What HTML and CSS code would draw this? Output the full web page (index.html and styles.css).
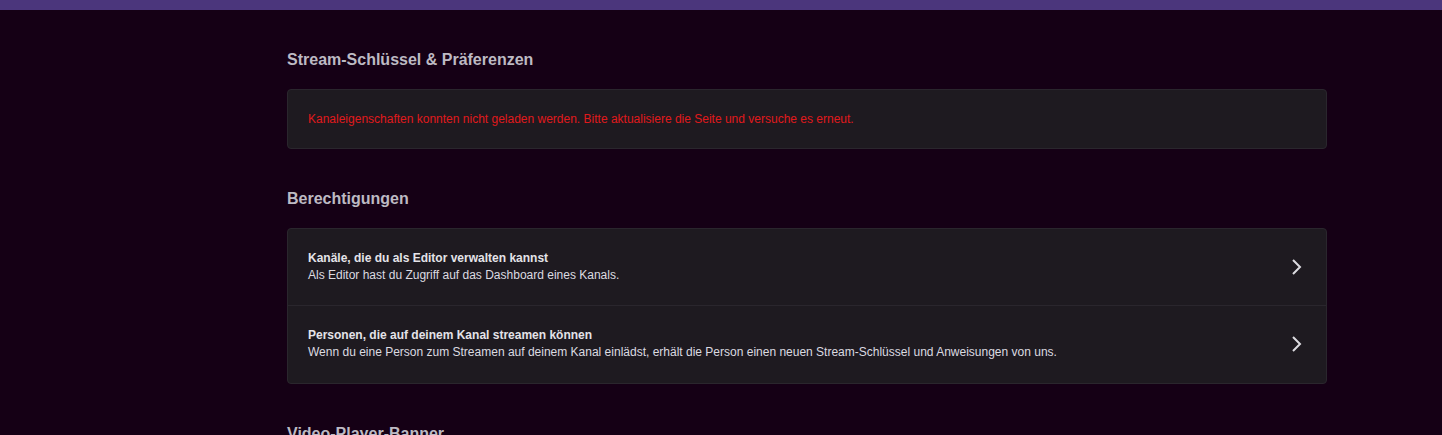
FILE: index.html
```html
<!DOCTYPE html>
<html lang="de">
<head>
<meta charset="utf-8">
<title>Stream-Schlüssel & Präferenzen</title>
<link rel="stylesheet" href="styles.css">
</head>
<body>
<div class="topbar"></div>
<main class="content">
  <section class="section">
    <h2 class="heading">Stream-Schlüssel &amp; Präferenzen</h2>
    <div class="box error-box">
      <p class="error">Kanaleigenschaften konnten nicht geladen werden. Bitte aktualisiere die Seite und versuche es erneut.</p>
    </div>
  </section>
  <section class="section">
    <h2 class="heading">Berechtigungen</h2>
    <div class="box list">
      <a class="row" href="#">
        <div class="row-text">
          <div class="row-title">Kanäle, die du als Editor verwalten kannst</div>
          <div class="row-desc">Als Editor hast du Zugriff auf das Dashboard eines Kanals.</div>
        </div>
        <svg class="chev" viewBox="0 0 20 20" width="20" height="20"><path d="M7 3 L14 10 L7 17" fill="none" stroke="currentColor" stroke-width="2"/></svg>
      </a>
      <a class="row" href="#">
        <div class="row-text">
          <div class="row-title">Personen, die auf deinem Kanal streamen können</div>
          <div class="row-desc">Wenn du eine Person zum Streamen auf deinem Kanal einlädst, erhält die Person einen neuen Stream-Schlüssel und Anweisungen von uns.</div>
        </div>
        <svg class="chev" viewBox="0 0 20 20" width="20" height="20"><path d="M7 3 L14 10 L7 17" fill="none" stroke="currentColor" stroke-width="2"/></svg>
      </a>
    </div>
  </section>
  <section class="section">
    <h2 class="heading">Video-Player-Banner</h2>
  </section>
</main>
</body>
</html>
```
FILE: styles.css
```css
html, body {
  margin: 0;
  padding: 0;
}
body {
  background: #150015;
  font-family: "Liberation Sans", Arial, sans-serif;
  color: #dedee3;
  height: 435px;
  overflow: hidden;
}
.topbar {
  height: 10px;
  background: #4b367c;
}
.content {
  width: 1040px;
  margin-left: 287px;
  padding-top: 40px;
  display: flex;
  flex-direction: column;
  gap: 40px;
}
.section {
  display: flex;
  flex-direction: column;
  gap: 19px;
}
.heading {
  margin: 0;
  font-size: 16px;
  line-height: 20px;
  font-weight: 700;
  color: #bdbac3;
}
.box {
  background: #1e1a20;
  border: 1px solid #2a262d;
  border-radius: 4px;
}
.error-box {
  padding: 20px;
}
.error {
  margin: 0;
  font-size: 12px;
  line-height: 18px;
  color: #e0191c;
}
.list {
  display: flex;
  flex-direction: column;
}
.row {
  display: flex;
  align-items: center;
  padding: 20px;
  min-height: 36px;
  text-decoration: none;
  color: inherit;
}
.row:last-child {
  padding-bottom: 21px;
}
.row + .row {
  border-top: 1px solid #2a262d;
}
.row-text {
  flex: 1;
}
.row-title {
  font-size: 12px;
  line-height: 16px;
  font-weight: 700;
  color: #e4e3e8;
}
.row-desc {
  font-size: 12px;
  line-height: 18px;
  color: #dcdbe0;
}
.chev {
  color: #dcdbe0;
  flex: none;
}
```
